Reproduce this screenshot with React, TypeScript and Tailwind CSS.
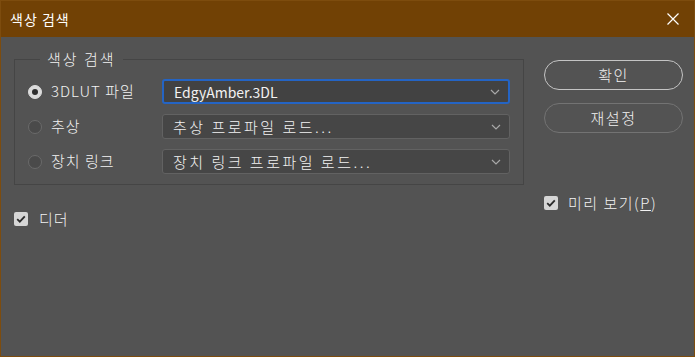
import { clsx } from 'clsx'

const font = { fontFamily: '"Noto Sans CJK KR", "Noto Sans", sans-serif' }

const Chevron = () => (
  <svg width="10" height="6" viewBox="0 0 10 6" className="shrink-0">
    <path d="M1 1l4 4 4-4" fill="none" stroke="#a8a8a8" strokeWidth="1.2" />
  </svg>
)

const Radio = ({ checked }: { checked?: boolean }) => (
  <span
    className={clsx(
      'flex size-[14px] shrink-0 items-center justify-center rounded-full border',
      checked ? 'border-[#dcdcdc] bg-[#dcdcdc]' : 'border-[#6a6a6a] bg-[#4a4a4a]'
    )}
  >
    {checked && <span className="size-[6px] rounded-full bg-[#2f2f2f]" />}
  </span>
)

const Check = () => (
  <span className="flex size-[14px] shrink-0 items-center justify-center rounded-[2px] bg-[#d6d6d6]">
    <svg width="10" height="8" viewBox="0 0 10 8">
      <path d="M1.2 4.2l2.6 2.5L8.8 1.3" fill="none" stroke="#2b2b2b" strokeWidth="1.8" />
    </svg>
  </span>
)

const rows = [
  { label: '3DLUT 파일', value: 'EdgyAmber.3DL', checked: true, active: true },
  { label: '추상', value: '추상 프로파일 로드...' },
  { label: '장치 링크', value: '장치 링크 프로파일 로드...' },
]

export default function App() {
  return (
    <div
      className="flex h-[357px] w-[695px] flex-col border border-[#7d4c0e] bg-[#535353] text-[14px] font-light text-[#f2f2f2]"
      style={font}
    >
      <div className="flex h-[36px] shrink-0 items-center justify-between bg-[#714105] pl-[9px] pr-[15px] text-[14px] font-normal text-white">
        <span className="tracking-[1px]">색상 검색</span>
        <svg width="12" height="12" viewBox="0 0 12 12">
          <path d="M0.5 0.5l11 11M11.5 0.5l-11 11" stroke="#ffffff" strokeWidth="1.2" />
        </svg>
      </div>

      <div className="flex flex-1 pl-[13px] pr-[10px]">
        <div className="flex w-[510px] flex-col">
          <fieldset className="mt-[12px] border border-[#454545] px-[13px] pb-[10px] pt-[10px]">
            <legend className="ml-[12px] px-[7px] text-[15px] leading-[20px] tracking-[2px]">
              색상 검색
            </legend>
            <div className="flex flex-col gap-[10px]">
              {rows.map((row) => (
                <div key={row.label} className="flex h-[25px] items-center">
                  <div className="flex w-[134px] items-center gap-[9px]">
                    <Radio checked={row.checked} />
                    <span className="text-[15px] tracking-[1px]">{row.label}</span>
                  </div>
                  <div
                    className={clsx(
                      'flex h-[25px] w-[348px] items-center justify-between rounded-[3px] pl-[10px] pr-[8px]',
                      row.active
                        ? 'border-2 border-[#2464c4] bg-[#424242]'
                        : 'border border-[#626262] bg-[#464646]'
                    )}
                  >
                    <span
                      className={clsx(
                        'leading-none',
                        row.active
                          ? 'text-[14px] font-normal tracking-[0px]'
                          : 'text-[15px] tracking-[2.5px]'
                      )}
                    >
                      {row.value}
                    </span>
                    <Chevron />
                  </div>
                </div>
              ))}
            </div>
          </fieldset>

          <div className="mt-[23px] flex items-center gap-[11px]">
            <Check />
            <span className="text-[15px] tracking-[1px]">디더</span>
          </div>
        </div>

        <div className="ml-[20px] flex w-[139px] flex-col pt-[23px]">
          <button className="h-[30px] rounded-full border-[1.5px] border-[#c4c4c4] text-[15px] tracking-[1.5px]">
            확인
          </button>
          <button className="mt-[13px] h-[30px] rounded-full border border-[#737373] text-[15px] tracking-[1.5px]">
            재설정
          </button>
          <div className="mt-[59px] flex items-center gap-[10px]">
            <Check />
            <span className="text-[15px] tracking-[1.5px]">
              미리 보기(<span className="underline">P</span>)
            </span>
          </div>
        </div>
      </div>
    </div>
  )
}
